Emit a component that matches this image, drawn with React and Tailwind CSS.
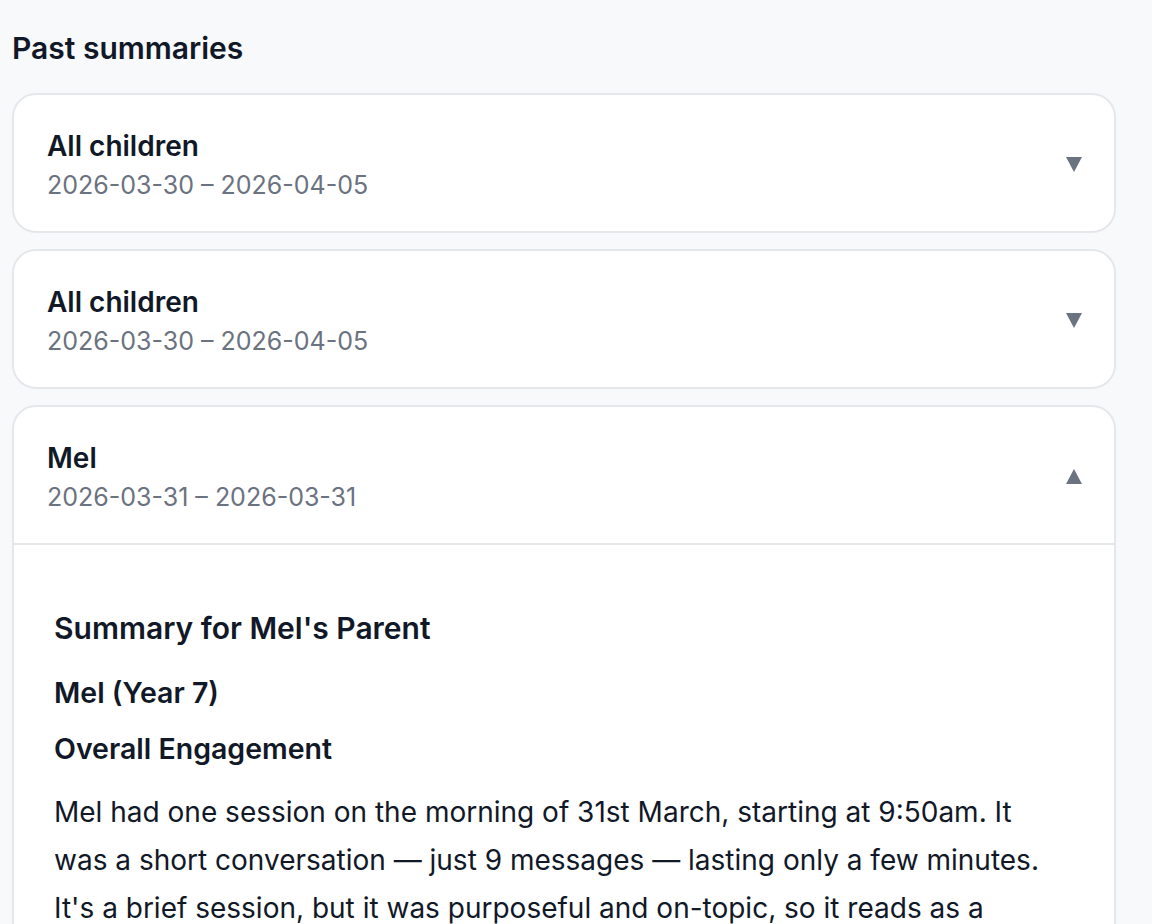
import React, { useState } from "react";

const summaries = [
  { id: 1, name: "All children", from: "2026-03-30", to: "2026-04-05" },
  { id: 2, name: "All children", from: "2026-03-30", to: "2026-04-05" },
  { id: 3, name: "Mel", from: "2026-03-31", to: "2026-03-31" },
];

const Caret = ({ up }) => (
  <svg width="16" height="15" viewBox="0 0 16 15" className="shrink-0">
    {up ? (
      <polygon points="8,0 16,15 0,15" fill="#6b7280" />
    ) : (
      <polygon points="0,0 16,0 8,15" fill="#6b7280" />
    )}
  </svg>
);

const SummaryBody = () => (
  <div className="px-[40px] pt-[65px] pb-[40px] text-[#111827]">
    <h3 className="text-[30px] font-semibold leading-[36px]">Summary for Mel's Parent</h3>
    <h4 className="mt-[29px] text-[28.5px] font-semibold leading-[36px]">Mel (Year 7)</h4>
    <h4 className="mt-[20px] text-[28.5px] font-semibold leading-[36px]">Overall Engagement</h4>
    <p className="mt-[21px] w-[1005px] text-[28px] leading-[48px]">
      Mel had one session on the morning of 31st March, starting at 9:50am. It was a short
      conversation — just 9 messages — lasting only a few minutes. It's a brief session, but
      it was purposeful and on-topic, so it reads as a focused check-in rather than a
      drifting chat.
    </p>
  </div>
);

export default function App() {
  const [open, setOpen] = useState(3);

  return (
    <div className="min-h-screen bg-[#f8f9fb] pl-[12px] pt-[30px] font-['Inter','Noto_Sans',sans-serif]">
      <h2 className="text-[30px] font-semibold leading-[36px] text-[#111827]">Past summaries</h2>
      <div className="mt-[27px] flex w-[1104px] flex-col gap-[16px]">
        {summaries.map((s) => {
          const isOpen = open === s.id;
          return (
            <div
              key={s.id}
              className="overflow-hidden rounded-[24px] border-2 border-[#e5e7eb] bg-white"
            >
              <button
                onClick={() => setOpen(isOpen ? null : s.id)}
                className="flex h-[136px] w-full items-center justify-between pl-[33px] pr-[32px] pt-[2px] text-left"
              >
                <div>
                  <div className="text-[28px] font-semibold leading-[36px] text-[#111827]">
                    {s.name}
                  </div>
                  <div className="mt-[5px] text-[25px] leading-[32px] text-[#6b7280]">
                    {s.from} – {s.to}
                  </div>
                </div>
                <Caret up={isOpen} />
              </button>
              {isOpen && (
                <div className="border-t-2 border-[#e5e7eb]">
                  <SummaryBody />
                </div>
              )}
            </div>
          );
        })}
      </div>
    </div>
  );
}
